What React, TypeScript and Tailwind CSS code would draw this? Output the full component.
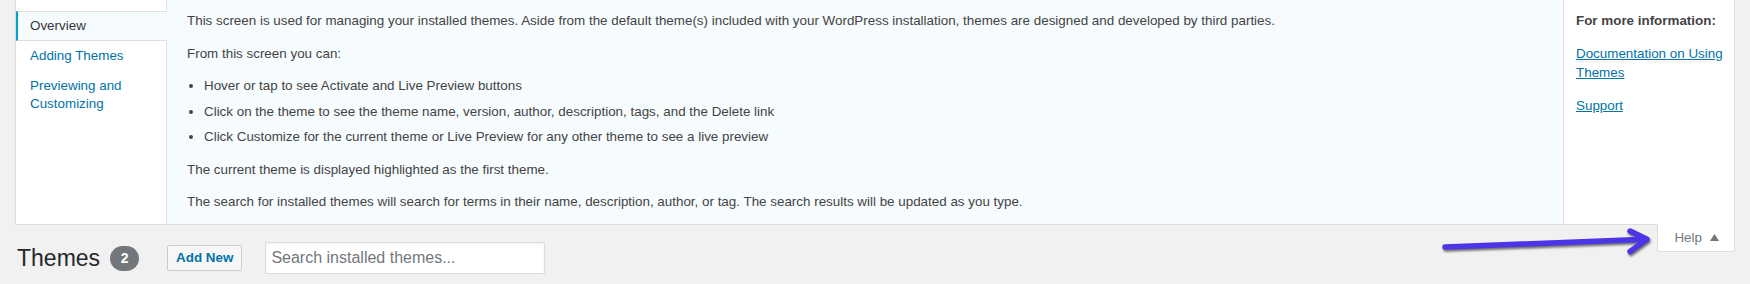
import React from 'react';

const tabs = [
  { label: 'Overview', active: true },
  { label: 'Adding Themes', active: false },
  { label: 'Previewing and Customizing', active: false },
];

const HelpArrow = () => (
  <svg
    className="absolute left-[1435px] top-[222px] drop-shadow-[1px_2px_1px_rgba(0,0,0,0.55)]"
    width="225"
    height="40"
    viewBox="0 0 225 40"
    fill="none"
  >
    <line x1="10" y1="25" x2="211" y2="17.3" stroke="#4c35e6" strokeWidth="5.5" strokeLinecap="round" />
    <polyline
      points="195,9 212,17.3 195,29.5"
      stroke="#4c35e6"
      strokeWidth="5.5"
      strokeLinecap="round"
      strokeLinejoin="round"
    />
  </svg>
);

const App = () => {
  return (
    <div className="relative h-[284px] w-full overflow-hidden bg-[#f1f1f1] font-['Liberation_Sans',Arial,sans-serif] text-[13.4px] text-[#444]">
      {/* help panel */}
      <div className="mx-[15px] flex h-[225px] border-x border-b border-[#ddd] bg-white">
        <div className="relative z-10 w-[150px] shrink-0 pt-[11px]">
          {tabs.map((tab) =>
            tab.active ? (
              <div
                key={tab.label}
                className="-mr-px border-y border-l-2 border-y-[#ddd] border-l-[#00a0d2] bg-[#f6fbfd] py-[5px] pl-[12px] pr-[5px] leading-[18px] text-[#32373c]"
              >
                {tab.label}
              </div>
            ) : (
              <div
                key={tab.label}
                className="border-y border-l-2 border-transparent py-[5px] pl-[12px] pr-[5px] leading-[18px] text-[#0073aa]"
              >
                {tab.label}
              </div>
            )
          )}
        </div>

        <div className="min-w-0 flex-1 border-l border-[#e1e1e1] bg-[#f6fbfd] px-[20px] pt-[11px] leading-[19.5px]">
          <p className="mb-[13px]">
            This screen is used for managing your installed themes. Aside from the default theme(s) included with your WordPress installation, themes are designed and developed by third parties.
          </p>
          <p className="mb-[13px]">From this screen you can:</p>
          <ul className="mb-[13px] list-disc pl-[17px]">
            <li className="mb-[6px]">Hover or tap to see Activate and Live Preview buttons</li>
            <li className="mb-[6px]">Click on the theme to see the theme name, version, author, description, tags, and the Delete link</li>
            <li className="mb-[6px]">Click Customize for the current theme or Live Preview for any other theme to see a live preview</li>
          </ul>
          <p className="mb-[13px]">The current theme is displayed highlighted as the first theme.</p>
          <p className="mb-[13px]">
            The search for installed themes will search for terms in their name, description, author, or tag. The search results will be updated as you type.
          </p>
        </div>

        <div className="w-[171px] shrink-0 border-l border-[#e1e1e1] bg-white pl-[12px] pr-[8px] pt-[11px] leading-[19.5px]">
          <p className="mb-[13px] font-bold">For more information:</p>
          <p className="mb-[13px]">
            <a href="#" className="text-[#0073aa] underline">Documentation on Using Themes</a>
          </p>
          <p>
            <a href="#" className="text-[#0073aa] underline">Support</a>
          </p>
        </div>
      </div>

      {/* title row + help toggle */}
      <div className="mx-[15px] flex items-start justify-between">
        <div className="mt-[17px] flex items-center pl-[2px]">
          <h1 className="text-[23px] font-normal leading-[29px] text-[#23282d]">Themes</h1>
          <span className="ml-[10px] flex h-[25px] min-w-[29px] items-center justify-center rounded-full bg-[#72777c] px-[9px] text-[14px] font-bold text-white">
            2
          </span>
          <button className="ml-[28px] h-[26px] rounded-[2px] border border-[#ccc] bg-[#f7f7f7] px-[8px] font-bold text-[#0073aa]">
            Add New
          </button>
          <input
            type="search"
            placeholder="Search installed themes..."
            className="ml-[23px] h-[32px] w-[280px] border border-[#ddd] bg-white pl-[5px] text-[16px] shadow-[inset_0_1px_2px_rgba(0,0,0,0.07)] outline-none placeholder:text-[#72777c]"
          />
        </div>
        <div className="relative -mt-px flex h-[28px] items-center rounded-b-[3px] border-x border-b border-[#ddd] bg-white pl-[16px] pr-[15px] text-[#72777c]">
          <span className="leading-[22px]">Help</span>
          <svg className="ml-[8px]" width="9" height="7" viewBox="0 0 9 7">
            <polygon points="4.5,0 9,7 0,7" fill="#72777c" />
          </svg>
        </div>
      </div>

      <HelpArrow />
    </div>
  );
};

export default App;
